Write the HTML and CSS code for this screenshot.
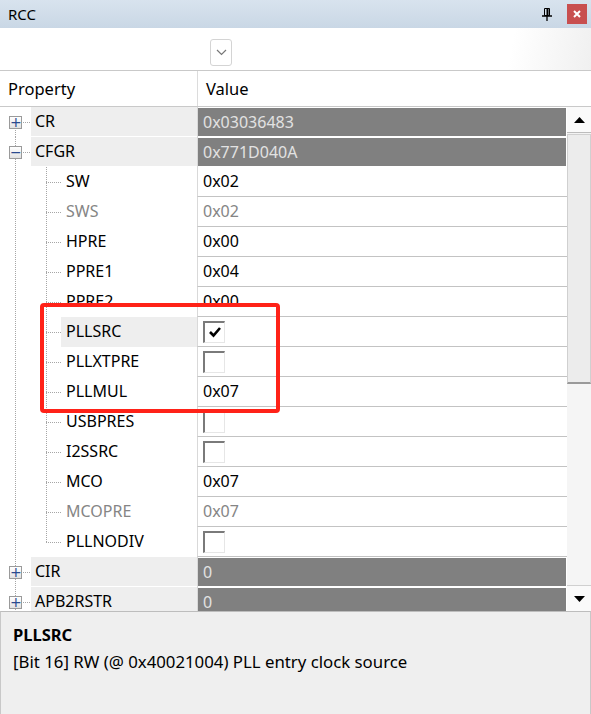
FILE: index.html
```html
<!DOCTYPE html>
<html>
<head>
<meta charset="utf-8">
<link rel="stylesheet" href="styles.css">
</head>
<body>
<div class="window">
  <div class="titlebar">
    <span class="title">RCC</span>
    <svg class="pin" width="10" height="13" viewBox="0 0 10 13"><path d="M2.5 0.5h5v7h-5z" fill="none" stroke="#000"/><path d="M5.5 1v6.5" stroke="#000" stroke-width="2"/><path d="M0 8h10" stroke="#000" stroke-width="1.5"/><path d="M5 8v5" stroke="#000" stroke-width="1.3"/></svg>
    <span class="close"><svg width="8" height="8" viewBox="0 0 8 8"><path d="M1 1l6 6M7 1l-6 6" stroke="#fff" stroke-width="2"/></svg></span>
  </div>
  <div class="toolbar">
    <span class="dropdown"><svg width="11" height="7" viewBox="0 0 11 7"><path d="M1 1l4.5 4.5L10 1" fill="none" stroke="#777" stroke-width="1.2"/></svg></span>
  </div>
  <div class="header">
    <div class="hcell">Property</div>
    <div class="hdiv"></div>
    <div class="hcell hval">Value</div>
  </div>
  <div class="body">
    <div class="rows">
      <div class="row">
        <div class="g top first"><span class="exp">+</span></div>
        <div class="name tname">CR</div>
        <div class="val"><div class="dark">0x03036483</div></div>
      </div>
      <div class="row">
        <div class="g top"><span class="exp">−</span></div>
        <div class="name tname">CFGR</div>
        <div class="val"><div class="dark">0x771D040A</div></div>
      </div>
      <div class="row">
        <div class="g"></div><div class="g2"></div>
        <div class="name cname">SW</div>
        <div class="val wv">0x02</div>
      </div>
      <div class="row">
        <div class="g"></div><div class="g2"></div>
        <div class="name cname dis">SWS</div>
        <div class="val wv dis">0x02</div>
      </div>
      <div class="row">
        <div class="g"></div><div class="g2"></div>
        <div class="name cname">HPRE</div>
        <div class="val wv">0x00</div>
      </div>
      <div class="row">
        <div class="g"></div><div class="g2"></div>
        <div class="name cname">PPRE1</div>
        <div class="val wv">0x04</div>
      </div>
      <div class="row">
        <div class="g"></div><div class="g2"></div>
        <div class="name cname">PPRE2</div>
        <div class="val wv">0x00</div>
      </div>
      <div class="row">
        <div class="g"></div><div class="g2"></div>
        <div class="name cname sel">PLLSRC</div>
        <div class="val wv"><span class="cb"><svg width="14" height="12" viewBox="0 0 14 12"><path d="M2 6l3.5 3.5L12 2" fill="none" stroke="#000" stroke-width="2.6"/></svg></span></div>
      </div>
      <div class="row">
        <div class="g"></div><div class="g2"></div>
        <div class="name cname">PLLXTPRE</div>
        <div class="val wv"><span class="cb"></span></div>
      </div>
      <div class="row">
        <div class="g"></div><div class="g2"></div>
        <div class="name cname">PLLMUL</div>
        <div class="val wv">0x07</div>
      </div>
      <div class="row">
        <div class="g"></div><div class="g2"></div>
        <div class="name cname">USBPRES</div>
        <div class="val wv"><span class="cb"></span></div>
      </div>
      <div class="row">
        <div class="g"></div><div class="g2"></div>
        <div class="name cname">I2SSRC</div>
        <div class="val wv"><span class="cb"></span></div>
      </div>
      <div class="row">
        <div class="g"></div><div class="g2"></div>
        <div class="name cname">MCO</div>
        <div class="val wv">0x07</div>
      </div>
      <div class="row">
        <div class="g"></div><div class="g2"></div>
        <div class="name cname dis">MCOPRE</div>
        <div class="val wv dis">0x07</div>
      </div>
      <div class="row">
        <div class="g"></div><div class="g2 last"></div>
        <div class="name cname">PLLNODIV</div>
        <div class="val wv"><span class="cb"></span></div>
      </div>
      <div class="row">
        <div class="g top"><span class="exp">+</span></div>
        <div class="name tname">CIR</div>
        <div class="val"><div class="dark">0</div></div>
      </div>
      <div class="row">
        <div class="g top"><span class="exp">+</span></div>
        <div class="name tname">APB2RSTR</div>
        <div class="val"><div class="dark">0</div></div>
      </div>
      <div class="highlight"></div>
    </div>
    <div class="scrollbar">
      <div class="sbtn"><svg width="11" height="6" viewBox="0 0 11 6"><path d="M0 6L5.5 0 11 6z" fill="#000"/></svg></div>
      <div class="thumb"></div>
      <div class="track"></div>
      <div class="sbtn down"><svg width="11" height="6" viewBox="0 0 11 6"><path d="M0 0h11L5.5 6z" fill="#000"/></svg></div>
    </div>
  </div>
  <div class="desc">
    <div class="dtitle">PLLSRC</div>
    <div class="dtext">[Bit 16] RW (@ 0x40021004) PLL entry clock source</div>
  </div>
</div>
</body>
</html>
```

FILE: styles.css
```css
* { box-sizing: border-box; }
html, body { margin: 0; padding: 0; background: #fff; }
body {
  font-family: "Noto Sans", "Open Sans", sans-serif;
  font-size: 16px;
  color: #000;
}
.window {
  width: 591px;
  height: 714px;
  display: flex;
  flex-direction: column;
  overflow: hidden;
}
.titlebar {
  height: 28px;
  flex: none;
  display: flex;
  align-items: center;
  padding: 0 4px 0 8px;
  background: linear-gradient(#d8e3ee, #c9d7e5);
}
.title { flex: 1; font-size: 15px; }
.pin { margin-right: 15px; margin-top: 1px; }
.close {
  width: 20px;
  height: 20px;
  background: #c84f4f;
  display: flex;
  align-items: center;
  justify-content: center;
}
.toolbar {
  height: 42px;
  flex: none;
  background: linear-gradient(100deg, #fff 0%, #fff 86%, #f0f0f0 100%);
  padding: 11px 0 0 210px;
}
.dropdown {
  width: 22px;
  height: 27px;
  border: 1px solid #d4d4d4;
  border-radius: 3px;
  background: #fff;
  display: flex;
  align-items: center;
  justify-content: center;
}
.header {
  height: 37px;
  flex: none;
  display: grid;
  grid-template-columns: 197px 1px 1fr;
  border-top: 1px solid #c9c9c9;
  border-bottom: 1px solid #c9c9c9;
  background: #fff;
}
.hcell { padding-left: 8px; display: flex; align-items: center; font-size: 16.5px; padding-bottom: 1px; }
.hval { padding-left: 8px; }
.hdiv { background: #dcdcdc; }
.body {
  height: 504px;
  flex: none;
  display: flex;
  overflow: hidden;
}
.rows {
  width: 567px;
  flex: none;
  position: relative;
}
.row {
  height: 30px;
  display: flex;
}
.g {
  width: 31px;
  flex: none;
  background-image: repeating-linear-gradient(to bottom, #a6a6a6 0 1px, transparent 1px 2px);
  background-size: 1px 100%;
  background-position: 15px 0;
  background-repeat: no-repeat;
}
.g.top {
  display: flex;
  align-items: center;
  padding-left: 9px;
  background-image:
    repeating-linear-gradient(to bottom, #a6a6a6 0 1px, transparent 1px 2px),
    repeating-linear-gradient(to right, #a6a6a6 0 1px, transparent 1px 2px);
  background-size: 1px 100%, 10px 1px;
  background-position: 15px 0, 21px 15px;
}
.g.top.first {
  background-size: 1px 50%, 10px 1px;
  background-position: 15px 100%, 21px 15px;
}
.g2 {
  width: 30px;
  flex: none;
  background-image:
    repeating-linear-gradient(to bottom, #a6a6a6 0 1px, transparent 1px 2px),
    repeating-linear-gradient(to right, #a6a6a6 0 1px, transparent 1px 2px);
  background-size: 1px 100%, 16px 1px;
  background-position: 15px 0, 15px 15px;
  background-repeat: no-repeat;
}
.g2.last {
  background-size: 1px 50%, 16px 1px;
  background-position: 15px 0, 15px 15px;
}
.exp {
  width: 13px;
  height: 13px;
  border: 1px solid #9a9a9a;
  background: linear-gradient(#ffffff, #e2e2e2);
  color: #2a4a8f;
  font-size: 14px;
  line-height: 10px;
  text-align: center;
  font-family: "DejaVu Sans", sans-serif;
  position: relative;
  z-index: 1;
}
.name {
  display: flex;
  align-items: center;
  flex: none;
  white-space: nowrap;
  padding-bottom: 2px;
}
.tname {
  width: 166px;
  padding-left: 4px;
  background: #eeeeee;
  border-bottom: 1px solid #fff;
}
.cname {
  width: 136px;
  padding-left: 5px;
}
.cname.sel { background: #eeeeee; }
.dis { color: #858585; }
.val {
  flex: 1;
  border-left: 1px solid #d9d9d9;
  display: flex;
  align-items: stretch;
}
.wv {
  align-items: center;
  padding-left: 5px;
  padding-bottom: 1px;
  border-bottom: 1px solid #c3c3c3;
}
.dark {
  flex: 1;
  margin: 1px 1px 1px 0;
  background: #808080;
  color: #e2e2e2;
  display: flex;
  align-items: center;
  padding-left: 5px;
  padding-bottom: 1px;
}
.cb {
  width: 22px;
  height: 22px;
  border-top: 2px solid #7a7a7a;
  border-left: 2px solid #7a7a7a;
  border-right: 1px solid #e6e6e6;
  border-bottom: 1px solid #e6e6e6;
  background: #fff;
  display: flex;
  align-items: center;
  justify-content: center;
  margin-top: 1px;
}
.highlight {
  position: absolute;
  left: 40px;
  top: 196px;
  width: 240px;
  height: 110px;
  border: 4px solid #ff2218;
  border-radius: 4px;
}
.scrollbar {
  width: 24px;
  flex: none;
  display: flex;
  flex-direction: column;
  background: #f3f3f3;
}
.sbtn {
  height: 26px;
  flex: none;
  display: flex;
  align-items: center;
  justify-content: center;
  background: #fafafa;
  border-bottom: 1px solid #bcbcbc;
}
.sbtn.down { border-bottom: none; border-top: 1px solid #d0d0d0; }
.thumb {
  height: 250px;
  flex: none;
  margin-top: 1px;
  background: #ececec;
  border: 1px solid #d0d0d0;
  border-bottom: 2px solid #9a9a9a;
}
.track { flex: 1; background: #f5f5f5; }
.desc {
  flex: 1;
  background: #efefef;
  border-top: 1px solid #bdbdbd;
  border-left: 1px solid #c8c8c8;
  border-right: 1px solid #c8c8c8;
  padding: 11px 0 0 12px;
}
.dtitle { font-weight: bold; font-size: 16.5px; line-height: 24px; }
.dtext { font-size: 16.8px; line-height: 28px; margin-top: 1px; }
```
